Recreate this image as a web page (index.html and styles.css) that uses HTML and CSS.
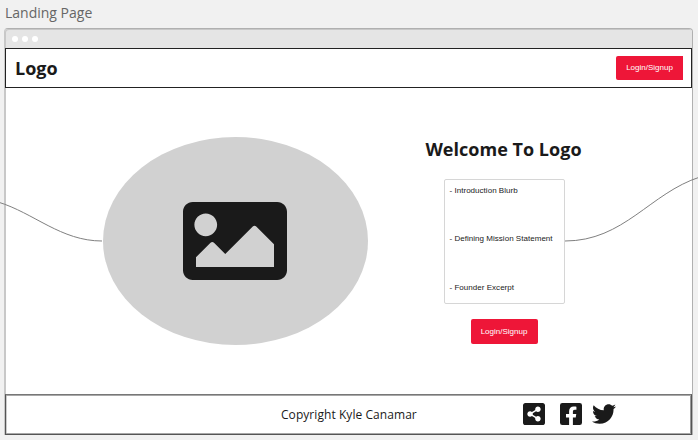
FILE: index.html
```html
<!DOCTYPE html>
<html lang="en">
<head>
<meta charset="utf-8">
<title>Landing Page</title>
<link rel="stylesheet" href="styles.css">
</head>
<body>
<div class="frame-label">Landing Page</div>
<div class="window">
  <div class="titlebar"><i class="dot"></i><i class="dot"></i><i class="dot"></i></div>
  <header class="header">
    <div class="logo">Logo</div>
    <button class="button">Login/Signup</button>
  </header>
  <main class="main">
    <div class="picture">
      <svg class="picture-icon" viewBox="0 64 512 384"><path d="M464 448H48c-26.51 0-48-21.49-48-48V112c0-26.51 21.49-48 48-48h416c26.51 0 48 21.49 48 48v288c0 26.51-21.49 48-48 48zM112 120c-30.928 0-56 25.072-56 56s25.072 56 56 56 56-25.072 56-56-25.072-56-56-56zM64 384h384V272l-87.515-87.515c-4.686-4.686-12.284-4.686-16.971 0L208 320l-55.515-55.515c-4.686-4.686-12.284-4.686-16.971 0L64 336v48z"/></svg>
    </div>
    <section class="intro">
      <h1 class="heading">Welcome To Logo</h1>
      <div class="blurb">
        <span>- Introduction Blurb</span>
        <span>- Defining Mission Statement</span>
        <span>- Founder Excerpt</span>
      </div>
      <button class="button">Login/Signup</button>
    </section>
  </main>
  <footer class="footer">
    <div class="copyright">Copyright Kyle Canamar</div>
    <svg class="social share" viewBox="0 32 448 448"><path d="M448 80v352c0 26.51-21.49 48-48 48H48c-26.51 0-48-21.49-48-48V80c0-26.51 21.49-48 48-48h352c26.51 0 48 21.49 48 48zM304 296c-14.562 0-27.823 5.561-37.783 14.671l-67.958-40.775a56.339 56.339 0 0 0 0-27.793l67.958-40.775C276.177 210.439 289.438 216 304 216c30.928 0 56-25.072 56-56s-25.072-56-56-56-56 25.072-56 56c0 4.797.605 9.453 1.74 13.897l-67.958 40.775C171.823 205.561 158.562 200 144 200c-30.928 0-56 25.072-56 56s25.072 56 56 56c14.562 0 27.823-5.561 37.783-14.671l67.958 40.775a56.088 56.088 0 0 0-1.74 13.897c0 30.928 25.072 56 56 56s56-25.072 56-56C360 321.072 334.928 296 304 296z"/></svg>
    <svg class="social facebook" viewBox="0 32 448 448"><path d="M400 32H48A48 48 0 0 0 0 80v352a48 48 0 0 0 48 48h137.25V327.69h-63V256h63v-54.64c0-62.15 37-96.48 93.67-96.48 27.14 0 55.52 4.84 55.52 4.84v61h-31.27c-30.81 0-40.42 19.12-40.42 38.73V256h68.78l-11 71.69h-57.78V480H400a48 48 0 0 0 48-48V80a48 48 0 0 0-48-48z"/></svg>
    <svg class="twitter" viewBox="0 48 512 416"><path d="M459.37 151.716c.325 4.548.325 9.097.325 13.645 0 138.72-105.583 298.558-298.558 298.558-59.452 0-114.68-17.219-161.137-47.106 8.447.974 16.568 1.299 25.34 1.299 49.055 0 94.213-16.568 130.274-44.832-46.132-.975-84.792-31.188-98.112-72.772 6.498.974 12.995 1.624 19.818 1.624 9.421 0 18.843-1.3 27.614-3.573-48.081-9.747-84.143-51.98-84.143-102.985v-1.299c13.969 7.797 30.214 12.67 47.431 13.319-28.264-18.843-46.781-51.005-46.781-87.391 0-19.492 5.197-37.36 14.294-52.954 51.655 63.675 129.3 105.258 216.365 109.807-1.624-7.797-2.599-15.918-2.599-24.04 0-57.828 46.782-104.934 104.934-104.934 30.213 0 57.502 12.67 76.67 33.137 23.715-4.548 46.456-13.32 66.599-25.34-7.798 24.366-24.366 44.833-46.132 57.827 21.117-2.273 41.584-8.122 60.426-16.243-14.292 20.791-32.161 39.308-52.628 54.253z"/></svg>
  </footer>
</div>
<svg class="connectors" viewBox="0 0 698 440">
  <path d="M-2 202C34 213 61 241 102 241"/>
  <path d="M565 241C624 241 650 193 700 177"/>
</svg>
</body>
</html>
```
FILE: styles.css
```css
* { box-sizing: border-box; }
body {
  margin: 0;
  width: 698px;
  height: 440px;
  overflow: hidden;
  position: relative;
  background: #f1f1f1;
  color: #1a1a1a;
  font-family: "Open Sans", "Noto Sans", sans-serif;
}
svg { display: block; fill: #1a1a1a; }
.frame-label {
  height: 28px;
  padding-left: 5px;
  font-size: 14px;
  line-height: 26px;
  color: #666;
}
.window {
  width: 689px;
  height: 407px;
  margin-left: 4px;
  display: flex;
  flex-direction: column;
  border: 1px solid #b0b0b0;
  border-left-color: #c8c8c8;
  border-bottom: 0;
  border-radius: 4px 4px 0 0;
  background: #fff;
  box-shadow: inset 1px 0 #c8c8c8;
}
.titlebar {
  height: 19px;
  flex: none;
  display: flex;
  align-items: center;
  gap: 4px;
  padding-left: 7px;
  background: #e5e5e5;
  border-radius: 3px 3px 0 0;
  box-shadow: inset 1px 1px #c8c8c8;
}
.dot { width: 6px; height: 6px; border-radius: 50%; background: #fff; }
.header {
  height: 40px;
  flex: none;
  display: flex;
  align-items: center;
  justify-content: space-between;
  padding: 0 8px 0 9px;
  border: 1px solid #222;
}
.logo { font-size: 18px; line-height: 24px; font-weight: 700; }
.button {
  width: 67px;
  height: 24px;
  padding: 0;
  border: 0;
  border-radius: 2px;
  background: #ee1638;
  color: #fff;
  font: 8px/24px "Liberation Sans", sans-serif;
}
.header .button { border-radius: 2px 0 0 2px; }
.intro .button { height: 25px; margin-left: 1px; }
.main { flex: 1; display: flex; align-items: flex-start; }
.picture {
  width: 265px;
  height: 208px;
  margin: 49px 0 0 97.5px;
  display: flex;
  align-items: center;
  justify-content: center;
  border-radius: 50%;
  background: #d1d1d1;
}
.picture-icon { width: 104px; height: 78px; }
.intro {
  width: 180px;
  margin: 49px 0 0 46px;
  display: flex;
  flex-direction: column;
  align-items: center;
}
.heading { margin: 0; font-size: 18px; line-height: 24px; letter-spacing: 0.03px; white-space: nowrap; }
.blurb {
  width: 121px;
  height: 125px;
  margin: 17.5px 0 15.5px 1px;
  padding: 6px 5px 10px;
  display: flex;
  flex-direction: column;
  justify-content: space-between;
  border: 1px solid #d6d6d6;
  border-radius: 2px;
  font: 8px/10px "Liberation Sans", sans-serif;
  letter-spacing: 0.03px;
  white-space: nowrap;
}
.footer {
  height: 41px;
  flex: none;
  display: flex;
  align-items: center;
  padding-left: 275px;
  border: 1px solid #555;
  border-top-color: #777;
  box-shadow: inset 0 1px #a8a8a8, inset 0 -1px #a8a8a8, inset 1px 0 #ccc, inset -1px 0 #999;
}
.copyright { width: 242px; font-size: 12px; line-height: 18px; letter-spacing: 0.06px; }
.social { width: 22px; height: 22px; flex: none; margin-bottom: 1px; }
.facebook { margin-left: 15px; }
.twitter { width: 24px; height: 20px; margin: 0 0 1px 10px; flex: none; }
.connectors {
  position: absolute;
  inset: 0;
  width: 698px;
  height: 440px;
  pointer-events: none;
}
.connectors path { fill: none; stroke: #808080; stroke-width: 1; }
```
